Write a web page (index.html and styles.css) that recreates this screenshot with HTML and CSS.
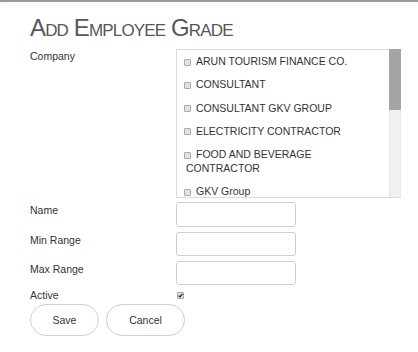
FILE: index.html
```html
<!DOCTYPE html>
<html lang="en">
<head>
    <meta charset="UTF-8">
    <meta name="viewport" content="width=device-width, initial-scale=1.0">
    <title>Add Employee Grade</title>
    <link rel="stylesheet" href="styles.css">
</head>
<body>
    <div class="top-line"></div>
    <div class="page">
        <h1 class="page-title">Add Employee Grade</h1>

        <form class="grade-form">
            <div class="row">
                <label class="row-label company-label">Company</label>
                <div class="company-box">
                    <div class="company-list">
                        <label class="company"><input type="checkbox">ARUN TOURISM FINANCE CO.</label>
                        <label class="company"><input type="checkbox">CONSULTANT</label>
                        <label class="company"><input type="checkbox">CONSULTANT GKV GROUP</label>
                        <label class="company"><input type="checkbox">ELECTRICITY CONTRACTOR</label>
                        <label class="company"><input type="checkbox">FOOD AND BEVERAGE CONTRACTOR</label>
                        <label class="company"><input type="checkbox">GKV Group</label>
                        <label class="company"><input type="checkbox">GKV HOLDINGS</label>
                        <label class="company"><input type="checkbox">HOSPITALITY SERVICES</label>
                        <label class="company"><input type="checkbox">KERALA TRAVELS</label>
                    </div>
                    <!-- list scrollbar -->
                    <div class="scroll-track"><div class="scroll-thumb"></div></div>
                </div>
            </div>

            <div class="row">
                <label class="row-label">Name</label>
                <input class="text-input first" type="text">
            </div>
            <div class="row">
                <label class="row-label">Min Range</label>
                <input class="text-input" type="text">
            </div>
            <div class="row">
                <label class="row-label">Max Range</label>
                <input class="text-input" type="text">
            </div>
            <div class="row active-row">
                <label class="row-label">Active</label>
                <span class="check checked">
                    <svg width="5" height="5" viewBox="0 0 5 5"><path d="M0.6 2.6 L1.9 3.9 L4.5 0.8" fill="none" stroke="#222" stroke-width="1.3"/></svg>
                </span>
            </div>

            <div class="actions">
                <button type="button" class="btn btn-save">Save</button>
                <button type="button" class="btn btn-cancel">Cancel</button>
            </div>
        </form>
    </div>
</body>
</html>
```

FILE: styles.css
```css
* { margin: 0; padding: 0; box-sizing: border-box; }
body {
    font-family: "Liberation Sans", Arial, sans-serif;
    font-size: 10.5px;
    line-height: 14px;
    color: #333;
    background: #fff;
}
.top-line {
    height: 2px;
    background: #9b9b9b;
    box-shadow: 0 2px 5px rgba(0, 0, 0, 0.08);
}
.page {
    padding: 14px 0 0 30px;
}
.page-title {
    font-size: 24px;
    line-height: 24px;
    font-weight: normal;
    font-variant: small-caps;
    letter-spacing: -0.85px;
    color: #575757;
}
.grade-form {
    margin-top: 9px;
}
.row {
    display: flex;
    align-items: flex-start;
    margin-bottom: 5px;
}
.row-label {
    width: 146px;
    flex-shrink: 0;
    padding-top: 1px;
}
.company-label {
    padding-top: 0;
}
.company-box {
    display: flex;
    width: 225px;
    height: 149px;
    margin-bottom: -1px;
}
.company-list {
    flex: 1;
    border: 1px solid #dcdcdc;
    border-right: none;
    overflow: hidden;
    padding-top: 4px;
}
.scroll-track {
    width: 12px;
    background: #f1f1f1;
    border-left: 1px solid #e8e8e8;
    border-right: 1px solid #e8e8e8;
    border-bottom: 1px solid #dcdcdc;
}
.scroll-thumb {
    height: 61px;
    margin: 0 -1px;
    background: #a5a5a5;
}
.company {
    display: block;
    padding: 0 8px 0 9px;
    margin-bottom: 9.3px;
}
.company input {
    appearance: none;
    -webkit-appearance: none;
    display: inline-block;
    width: 7px;
    height: 7px;
    margin: 0 5px 0 -2px;
    vertical-align: -0.5px;
    background: #e2e2e2;
    border: 1px solid #a9a9a9;
    border-radius: 1px;
}
.text-input {
    width: 120px;
    height: 24px;
    border: 1px solid #cfcfcf;
    border-radius: 3px;
    padding: 2px 5px;
    font: inherit;
}
.text-input.first {
    height: 25px;
}
.active-row {
    margin-top: -2px;
    margin-bottom: 2px;
}
.active-row .row-label {
    padding-top: 0;
}
.check {
    display: flex;
    align-items: center;
    justify-content: center;
    width: 7px;
    height: 7px;
    margin: 4px 0 0 1px;
    background: #e2e2e2;
    border: 1px solid #a9a9a9;
    border-radius: 1px;
}
.actions {
    display: flex;
    gap: 7px;
}
.btn {
    height: 32px;
    border: 1px solid #cfcfcf;
    border-radius: 16px;
    background: #fff;
    color: #333;
    font: inherit;
    cursor: pointer;
}
.btn:hover {
    background: #f5f5f5;
}
.btn-save {
    width: 69px;
}
.btn-cancel {
    width: 79px;
}
```
